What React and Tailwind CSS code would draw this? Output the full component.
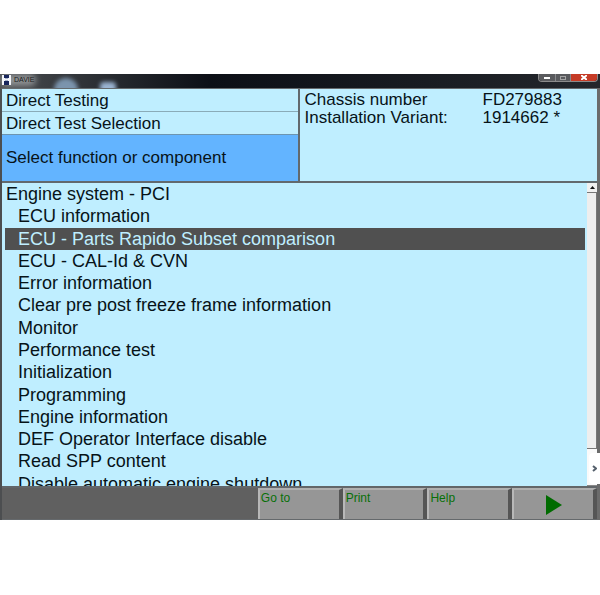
import { useState } from 'react';

const functions = [
  'ECU information',
  'ECU - Parts Rapido Subset comparison',
  'ECU - CAL-Id & CVN',
  'Error information',
  'Clear pre post freeze frame information',
  'Monitor',
  'Performance test',
  'Initialization',
  'Programming',
  'Engine information',
  'DEF Operator Interface disable',
  'Read SPP content',
  'Disable automatic engine shutdown',
];

const toolButton =
  'h-full min-w-0 flex-1 border-t-2 border-l-2 border-r-4 border-t-[#b0b0b0] border-l-[#b8b8b8] border-r-[#555555] bg-[#969696] px-px text-left text-[12px] leading-4 text-[#087008]';

function TitleBar() {
  return (
    <header className="relative flex h-[14px] items-start overflow-hidden bg-linear-to-r from-[#4a4d50] via-[#0c0f16] via-35% to-[#24272c]">
      {/* Blurred desktop showing through the glass title bar */}
      <div className="absolute top-1 left-[54px] h-6 w-6 rounded-full bg-[#7b94ad] blur-[2px]" />
      <div className="absolute top-2 left-[100px] h-5 w-4 rounded bg-[#9ab4d2] blur-[2px]" />
      <div className="absolute top-0 left-0 h-3 w-9 rounded-full bg-[#8f9294] blur-[3px]" />
      <svg className="relative mt-px ml-0.5 h-[10px] w-[9px]" viewBox="0 0 9 10" aria-hidden="true">
        <rect width="9" height="10" fill="#f4f6fa" />
        <path d="M2 0h5v3H2zM2 6h5v4H2z" fill="#17255c" />
        <path d="M3 3h3v1H3zM3 5h3v1H3z" fill="#a9b3cc" />
      </svg>
      <h1 className="relative ml-[3px] text-[7px] leading-[11px] text-[#1b1b1b]">DAVIE</h1>
      <div className="relative mr-0.5 ml-auto flex h-2 overflow-hidden rounded-b border-x border-b border-[#8b8b8b]">
        <button type="button" aria-label="Minimize" className="flex w-4 items-center justify-center bg-[#5a5b5e]">
          <span className="h-0.5 w-1.5 bg-white" />
        </button>
        <button type="button" aria-label="Maximize" className="flex w-4 items-center justify-center border-x border-[#88898c] bg-[#5a5b5e]">
          <span className="h-1 w-1.5 border border-[#a5a5a5]" />
        </button>
        <button type="button" aria-label="Close" className="flex w-[26px] items-center justify-center bg-[#c53b26]">
          <svg className="h-[5px] w-[6px]" viewBox="0 0 6 5" aria-hidden="true">
            <path d="M0 0l6 5M6 0L0 5" stroke="#fff" strokeWidth="2" />
          </svg>
        </button>
      </div>
    </header>
  );
}

function Scrollbar() {
  return (
    <div className="flex w-[10px] shrink-0 flex-col bg-[#eeeeee]">
      <button type="button" aria-label="Scroll up" className="flex h-[10px] items-center justify-center border-b border-[#777777] bg-[#f1f1f1]">
        <svg className="h-[3px] w-[5px]" viewBox="0 0 5 3" aria-hidden="true">
          <path d="M0 3L2.500 0L5 3z" fill="#111" />
        </svg>
      </button>
      <div className="flex-1 border-r border-b border-[#777777] bg-[#eeeeee]" />
      <div className="h-[37px] border-b border-[#888888] bg-[#fafafa]" />
    </div>
  );
}

export default function App() {
  const [selected, setSelected] = useState(1);

  return (
    <div className="min-h-screen bg-white pt-[74px] font-['Liberation_Sans',Arial,sans-serif] text-[#071318]">
      <main className="relative">
        <TitleBar />
        <div className="border-t border-r-3 border-l-2 border-t-[#656a6d] border-r-[#6b6b6b] border-l-[#4c4e50]">
          <section className="grid grid-cols-2 border-b-2 border-[#62696d] bg-[#bfeeff]">
            <div className="border-r-2 border-[#62696d] text-[17px]">
              <p className="h-[23px] border-b border-[#8aabb8] pl-1 leading-[24px]">Direct Testing</p>
              <p className="h-[23px] border-b border-[#6d95b0] pl-1 leading-[24px]">Direct Test Selection</p>
              <h2 className="h-[46px] bg-[#63b4ff] pl-1 leading-[46px]">Select function or component</h2>
            </div>
            <dl className="grid grid-cols-[178px_1fr] content-start pt-0.5 pl-[5px] text-[17px] leading-[18px]">
              <dt>Chassis number</dt>
              <dd>FD279883</dd>
              <dt>Installation Variant:</dt>
              <dd>1914662 *</dd>
            </dl>
          </section>

          <section className="flex h-[303px] bg-[#bfeeff]">
            <div className="min-w-0 flex-1 overflow-hidden">
              <ul className="mr-0.5 ml-[3px] grid h-[312px] auto-rows-fr text-[18px] leading-[23px]">
                <li className="pl-px">Engine system - PCI</li>
                {functions.map((name, i) => (
                  <li key={name} className="flex">
                    <button
                      type="button"
                      onClick={() => setSelected(i)}
                      className={
                        i === selected
                          ? 'w-full bg-[#505050] pl-[13px] text-left whitespace-nowrap text-[#bfeeff]'
                          : 'w-full pl-[13px] text-left whitespace-nowrap'
                      }
                    >
                      {name}
                    </button>
                  </li>
                ))}
              </ul>
            </div>
            <Scrollbar />
          </section>

          <nav className="flex h-[34px] border-t-2 border-b border-t-[#626669] border-b-[#65696c] bg-[#606060]">
            <div className="w-[43%]" />
            <div className="flex flex-1">
              <button type="button" className={toolButton}>
                <span className="block h-full">Go to</span>
              </button>
              <button type="button" className={toolButton}>
                <span className="block h-full">Print</span>
              </button>
              <button type="button" className={toolButton}>
                <span className="block h-full">Help</span>
              </button>
              <button type="button" aria-label="Run" className={toolButton}>
                <svg className="mx-auto h-5 w-4" viewBox="0 0 16 20" aria-hidden="true">
                  <path d="M0 0L16 10L0 20z" fill="#006b00" />
                </svg>
              </button>
            </div>
          </nav>
        </div>

        {/* Panel expander over the right edge */}
        <button type="button" aria-label="Expand panel" className="absolute right-0 bottom-[36px] flex h-[31px] w-[11px] items-center justify-center rounded-l bg-white">
          <svg className="h-[7px] w-[5px]" viewBox="0 0 5 7" aria-hidden="true">
            <path d="M1 1L4 3.500L1 6" fill="none" stroke="#55606c" strokeWidth="2" />
          </svg>
        </button>
      </main>
    </div>
  );
}
